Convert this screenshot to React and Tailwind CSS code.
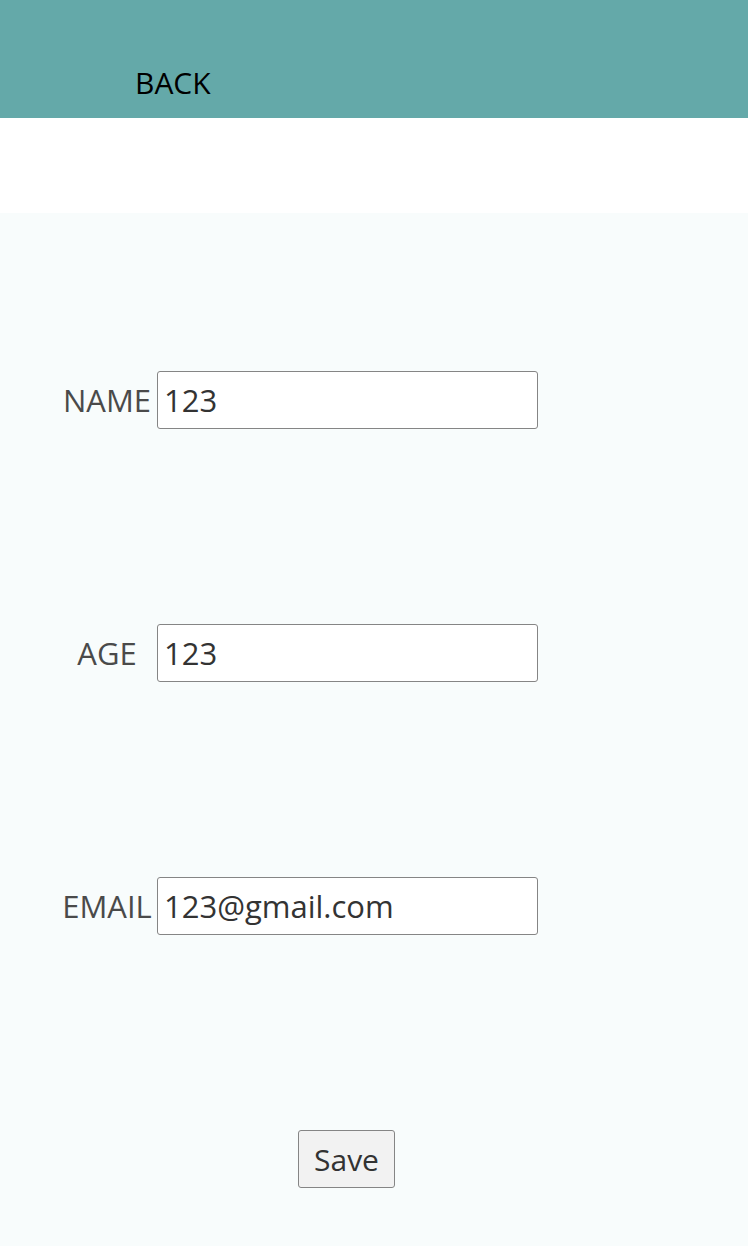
import { useState } from "react";

const Field = ({ label, value, onChange }) => (
  <div className="flex items-center">
    <label className="w-[97px] pr-[3px] text-center text-[31px] text-[#4a4a4a]">{label}</label>
    <input
      value={value}
      onChange={(e) => onChange(e.target.value)}
      className="h-[58px] w-[381px] rounded-[3px] border border-[#858585] bg-white px-[6px] text-[31px] text-[#333] outline-none"
    />
  </div>
);

export default function App() {
  const [form, setForm] = useState({ name: "123", age: "123", email: "123@gmail.com" });
  const set = (key) => (v) => setForm({ ...form, [key]: v });

  return (
    <div className="min-h-[1246px] bg-white font-['Open_Sans',sans-serif]">
      {/* Header */}
      <div className="flex h-[118px] items-end bg-[#64a9a9] pb-[20px] pl-[135px]">
        <button className="text-[30px] leading-none text-black">BACK</button>
      </div>

      <div className="h-[95px]" />

      {/* Form */}
      <div className="flex min-h-[1033px] flex-col gap-[195px] bg-[#f8fcfc] pl-[60px] pt-[158px]">
        <Field label="NAME" value={form.name} onChange={set("name")} />
        <Field label="AGE" value={form.age} onChange={set("age")} />
        <Field label="EMAIL" value={form.email} onChange={set("email")} />
        <div className="ml-[238px]">
          <button className="h-[58px] w-[97px] rounded-[3px] border border-[#858585] bg-[#f2f2f2] text-[30px] text-[#333]">
            Save
          </button>
        </div>
      </div>
    </div>
  );
}
